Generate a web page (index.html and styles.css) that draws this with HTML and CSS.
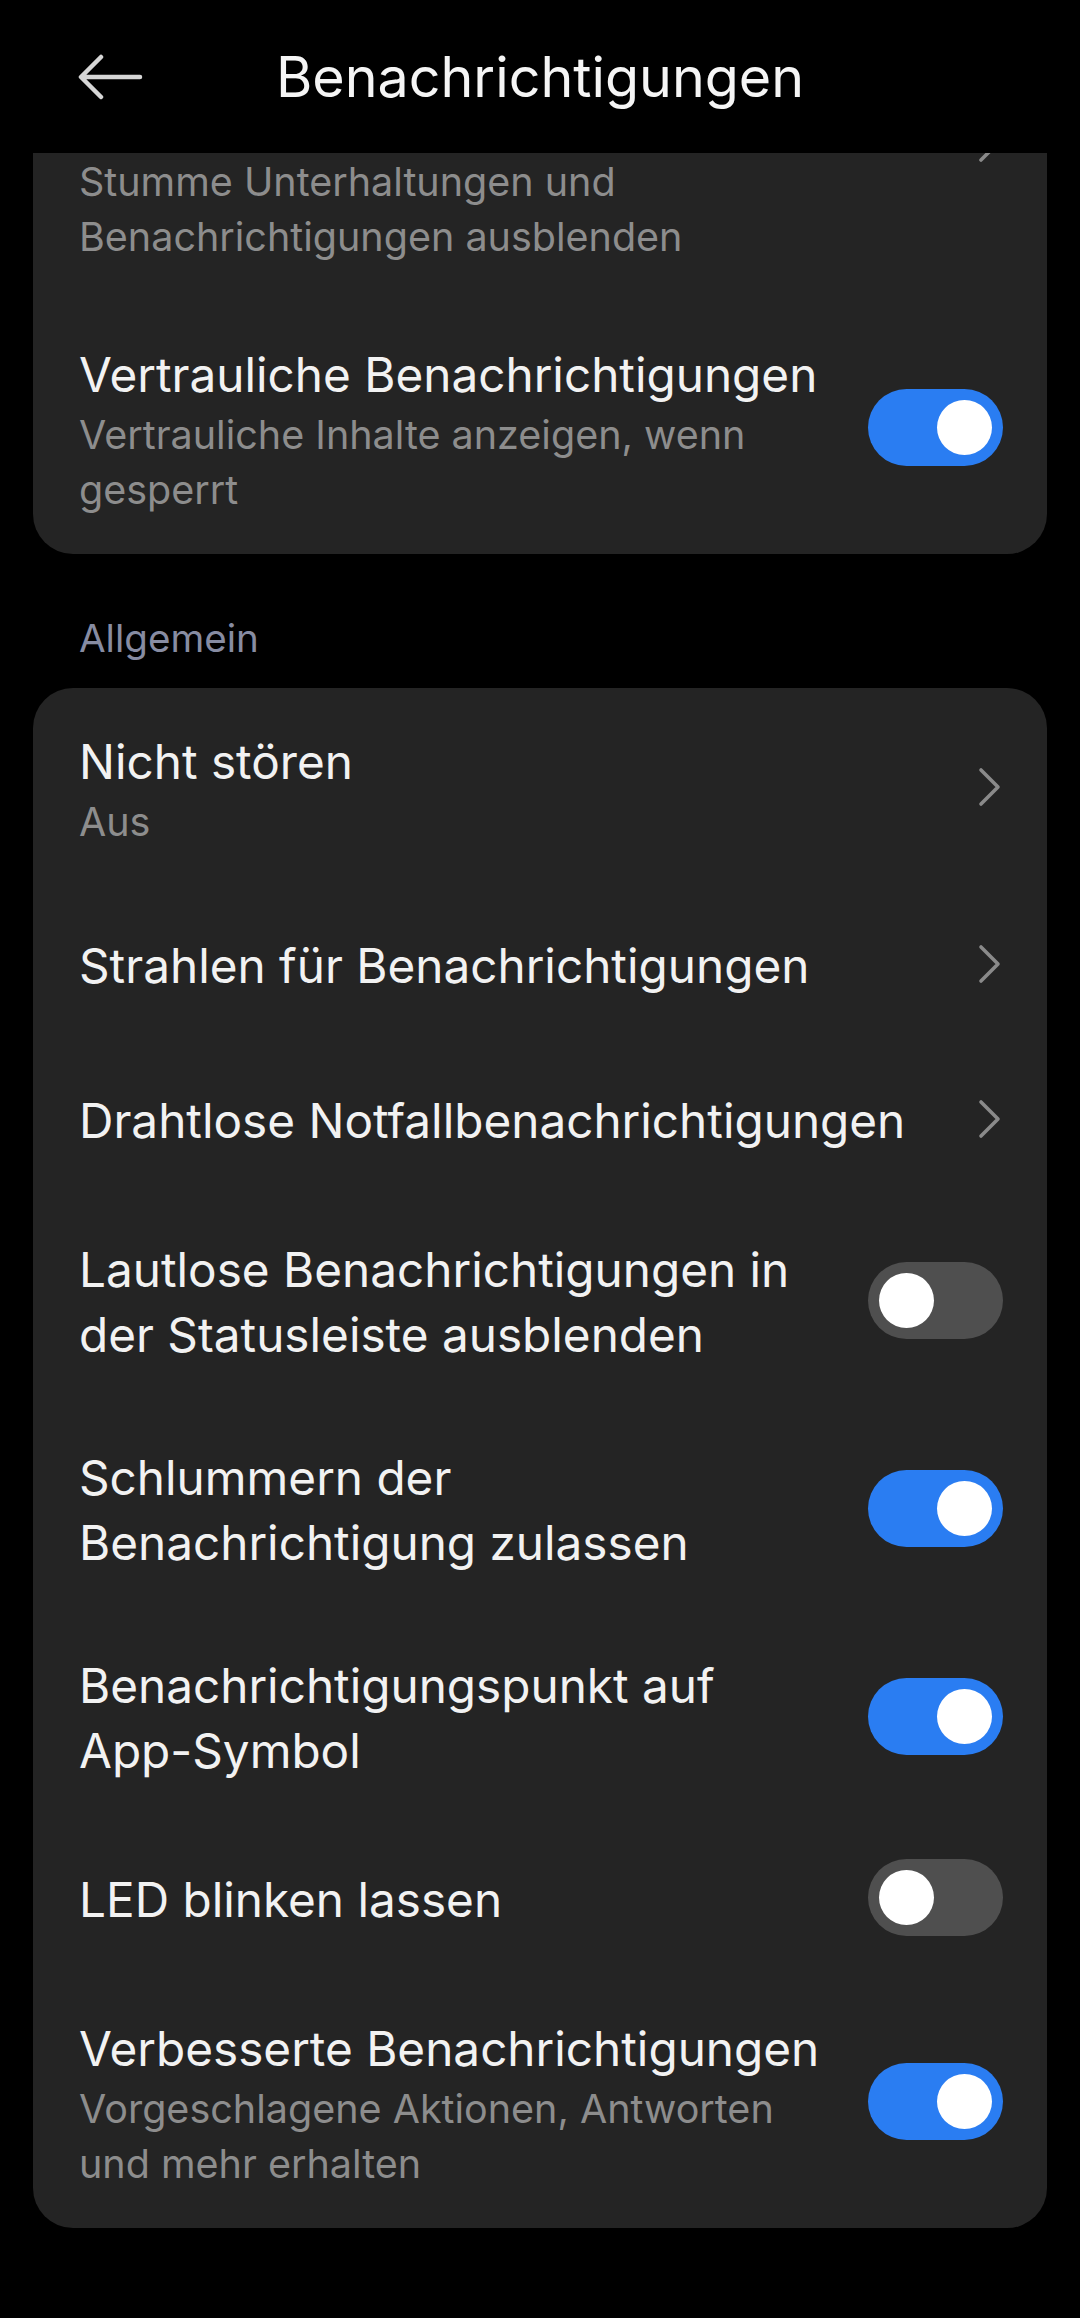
FILE: index.html
```html
<!DOCTYPE html>
<html lang="de">
<head>
<meta charset="utf-8">
<title>Benachrichtigungen</title>
<link rel="stylesheet" href="styles.css">
</head>
<body>
<div class="screen">
  <header class="topbar">
    <div class="back">
      <svg width="66" height="48" viewBox="0 0 66 48" aria-hidden="true">
        <path d="M62 24H4M23 4L3 24L23 44" fill="none" stroke="#d6d6d6" stroke-width="4.5" stroke-linecap="round" stroke-linejoin="round"/>
      </svg>
    </div>
    <h1 class="title">Benachrichtigungen</h1>
    <div></div>
  </header>

  <main class="scroll">
    <section class="card card-first">
      <div class="row row-clipped">
        <div class="text">
          <div class="summary">Stumme Unterhaltungen und Benachrichtigungen ausblenden</div>
        </div>
        <svg class="chev chev-clipped" width="26" height="40" viewBox="0 0 26 40" aria-hidden="true"><path d="M5 3L22 20L5 37" fill="none" stroke="#8a8a8a" stroke-width="3.6" stroke-linecap="round" stroke-linejoin="round"/></svg>
      </div>
      <div class="row">
        <div class="text">
          <div class="label">Vertrauliche Benachrichtigungen</div>
          <div class="summary">Vertrauliche Inhalte anzeigen, wenn gesperrt</div>
        </div>
        <div class="switch on"><span class="knob"></span></div>
      </div>
    </section>

    <h2 class="section">Allgemein</h2>

    <section class="card">
      <div class="row">
        <div class="text">
          <div class="label">Nicht stören</div>
          <div class="summary">Aus</div>
        </div>
        <svg class="chev" width="26" height="40" viewBox="0 0 26 40" aria-hidden="true"><path d="M5 3L22 20L5 37" fill="none" stroke="#8a8a8a" stroke-width="3.6" stroke-linecap="round" stroke-linejoin="round"/></svg>
      </div>
      <div class="row">
        <div class="text">
          <div class="label">Strahlen für Benachrichtigungen</div>
        </div>
        <svg class="chev" width="26" height="40" viewBox="0 0 26 40" aria-hidden="true"><path d="M5 3L22 20L5 37" fill="none" stroke="#8a8a8a" stroke-width="3.6" stroke-linecap="round" stroke-linejoin="round"/></svg>
      </div>
      <div class="row">
        <div class="text">
          <div class="label">Drahtlose Notfallbenachrichtigungen</div>
        </div>
        <svg class="chev" width="26" height="40" viewBox="0 0 26 40" aria-hidden="true"><path d="M5 3L22 20L5 37" fill="none" stroke="#8a8a8a" stroke-width="3.6" stroke-linecap="round" stroke-linejoin="round"/></svg>
      </div>
      <div class="row">
        <div class="text">
          <div class="label">Lautlose Benachrichtigungen in der Statusleiste ausblenden</div>
        </div>
        <div class="switch"><span class="knob"></span></div>
      </div>
      <div class="row">
        <div class="text">
          <div class="label">Schlummern der Benachrichtigung zulassen</div>
        </div>
        <div class="switch on"><span class="knob"></span></div>
      </div>
      <div class="row">
        <div class="text">
          <div class="label">Benachrichtigungspunkt auf App-Symbol</div>
        </div>
        <div class="switch on"><span class="knob"></span></div>
      </div>
      <div class="row">
        <div class="text">
          <div class="label">LED blinken lassen</div>
        </div>
        <div class="switch"><span class="knob"></span></div>
      </div>
      <div class="row">
        <div class="text">
          <div class="label">Verbesserte Benachrichtigungen</div>
          <div class="summary">Vorgeschlagene Aktionen, Antworten und mehr erhalten</div>
        </div>
        <div class="switch on"><span class="knob"></span></div>
      </div>
    </section>
  </main>
</div>
</body>
</html>
```
FILE: styles.css
```css
* { box-sizing: border-box; }

html, body {
  margin: 0;
  padding: 0;
  background: #000;
}

body {
  font-family: "Inter", "Noto Sans", sans-serif;
  color: #f2f2f2;
  -webkit-font-smoothing: antialiased;
}

.screen {
  width: 1080px;
  height: 2318px;
  display: flex;
  flex-direction: column;
  overflow: hidden;
  background: #000;
}

.topbar {
  height: 153px;
  flex: 0 0 153px;
  display: grid;
  grid-template-columns: 1fr auto 1fr;
  align-items: center;
  background: #000;
  position: relative;
  z-index: 2;
}

.back {
  padding-left: 78px;
  display: flex;
  align-items: center;
}

.back svg { display: block; }

.title {
  margin: 0;
  font-size: 55.6px;
  font-weight: 400;
  line-height: 1;
  color: #f5f5f5;
}

.scroll {
  flex: 1 1 auto;
  overflow: hidden;
  padding: 0 33px;
}

.card {
  background: #242424;
  border-radius: 40px;
  padding: 0 44px 0 46px;
}

/* list is scrolled: the top of the first card sits under the app bar */
.card-first {
  margin-top: -40px;
  border-top-left-radius: 0;
  border-top-right-radius: 0;
}

.row {
  display: flex;
  align-items: center;
  gap: 48px;
  padding: 39px 0;
}

.row-clipped {
  align-items: flex-start;
}

.text {
  flex: 1 1 auto;
  min-width: 0;
  min-height: 80px;
  display: flex;
  flex-direction: column;
  justify-content: center;
  padding-top: 3px;
  margin-bottom: -3px;
}

.label {
  font-size: 47.7px;
  line-height: 65px;
  color: #f2f2f2;
}

.summary {
  font-size: 39.5px;
  line-height: 55px;
  color: #8d8d8d;
}

.chev {
  flex: 0 0 auto;
  display: block;
  margin-right: 1px;
}

.chev-clipped {
  margin-top: -29px;
}

.switch {
  flex: 0 0 135px;
  width: 135px;
  height: 77px;
  border-radius: 39px;
  background: #4f4f4f;
  padding: 11px;
  display: flex;
  align-items: center;
  justify-content: flex-start;
}

.switch.on {
  background: #2a7df2;
  justify-content: flex-end;
}

.knob {
  width: 55px;
  height: 55px;
  border-radius: 50%;
  background: #fff;
  display: block;
}

.section {
  margin: 0;
  padding: 57px 0 23px 46px;
  font-size: 38.6px;
  line-height: 54px;
  font-weight: 400;
  color: #878ca2;
}
```
